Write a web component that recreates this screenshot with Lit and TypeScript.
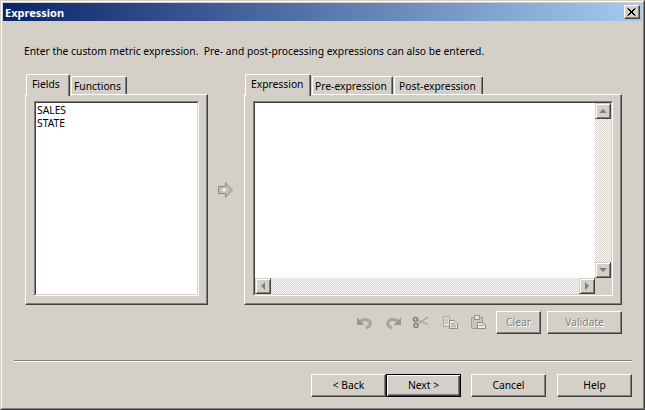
import { LitElement, html, css } from "lit";
import { customElement } from "lit/decorators.js";

@customElement("app-root")
export class AppRoot extends LitElement {
  static styles = css`
    :host { display: block; width: 645px; height: 410px; font-family: "Noto Sans", "DejaVu Sans", sans-serif; font-size: 10.3px; color: #000; }
    * { box-sizing: border-box; }
    .win { width: 645px; height: 410px; background: #d4d0c8; border: 1px solid; border-color: #d4d0c8 #404040 #404040 #d4d0c8; }
    .frame { height: 100%; border: 1px solid; border-color: #fff #808080 #808080 #fff; padding: 1px; display: flex; flex-direction: column; }
    .title { height: 18px; flex: none; display: flex; align-items: center; justify-content: space-between; padding: 0 2px 0 2px; background: linear-gradient(90deg, #0a246a, #a6caf0); color: #fff; font-weight: 700; font-size: 11px; }
    .close { width: 16px; height: 14px; background: #d4d0c8; border: 1px solid; border-color: #fff #404040 #404040 #fff; box-shadow: inset -1px -1px #808080; display: flex; align-items: center; justify-content: center; padding: 0 1px 1px 0; }
    .body { flex: 1; display: flex; flex-direction: column; padding: 0 20px 0 22px; }
    .intro { margin-top: 22px; line-height: 16px; height: 16px; white-space: pre; margin-left: -1px; }
    .panes { display: flex; margin-top: 15px; align-items: flex-start; }
    .col { display: flex; flex-direction: column; }
    .col.left { width: 183px; }
    .col.right { width: 378px; }
    .arrow { width: 36px; height: 231px; display: flex; align-items: center; justify-content: center; }
    .tabs { display: flex; height: 20px; align-items: flex-end; padding-left: 1px; }
    .tab { height: 18px; padding: 0 0 0 2px; border: 1px solid; border-color: #fff #404040 transparent #fff; border-bottom: 0; border-radius: 2px 2px 0 0; box-shadow: inset -1px 0 #808080; line-height: 18px; margin-left: 1px; white-space: nowrap; }
    .tab.active { height: 22px; margin-bottom: -2px; margin-left: 0; padding-left: 5px; position: relative; z-index: 1; background: #d4d0c8; line-height: 18px; }
    .t-fields { width: 44px; }
    .t-functions { width: 56px; }
    .t-expression { width: 66px; }
    .t-pre { width: 81px; }
    .t-post { width: 89px; padding-left: 4px; }
    .pane { height: 211px; display: flex; border: 1px solid; border-color: #fff #404040 #404040 #fff; box-shadow: inset -1px -1px #808080; padding: 6px 8px 8px 8px; }
    .sunken { flex: 1; min-width: 0; border: 1px solid; border-color: #808080 #fff #fff #808080; }
    .well { height: 100%; background: #fff; border: 1px solid; border-color: #404040 #d4d0c8 #d4d0c8 #404040; }
    .list { padding: 1px 1px 0; line-height: 13px; }
    .editor { display: grid; grid-template-columns: 1fr 16px; grid-template-rows: 1fr 16px; }
    .v { display: flex; flex-direction: column; grid-column: 2; grid-row: 1; }
    .h { display: flex; grid-column: 1; grid-row: 2; }
    .corner { background: #d4d0c8; grid-column: 2; grid-row: 2; }
    .track { flex: 1; background: repeating-conic-gradient(#fff 0 25%, #d4d0c8 0 50%) 0 0 / 2px 2px; }
    .sb { flex: none; width: 16px; height: 16px; background: #d4d0c8; border: 1px solid; border-color: #d4d0c8 #404040 #404040 #d4d0c8; box-shadow: inset 1px 1px #fff, inset -1px -1px #808080; display: flex; align-items: center; justify-content: center; }
    .toolbar { display: flex; justify-content: flex-end; align-items: center; margin-top: 6px; height: 23px; }
    .icon { width: 20px; height: 16px; margin-right: 9px; display: block; }
    .icon.last { margin-right: 7px; }
    button { font: inherit; color: #000; height: 23px; padding: 0 0 1px; background: #d4d0c8; border: 1px solid; border-color: #fff #404040 #404040 #fff; box-shadow: inset -1px -1px #808080; }
    button:disabled { color: #808080; text-shadow: 1px 1px #fff; }
    .clear { width: 45px; margin-right: 6px; }
    .validate { width: 75px; }
    .sep { margin: 26px -10px 0 -11px; height: 2px; background: #808080; border-bottom: 1px solid #fff; }
    .footer { display: flex; justify-content: flex-end; margin: 12px -10px 0 0; }
    .footer button { width: 75px; }
    .footer .next { border-color: #000; box-shadow: inset 1px 1px #fff, inset -1px -1px #404040, inset -2px -2px #808080; margin: 0 10px 0 0; }
    .footer .cancel { margin-right: 11px; }
  `;

  private tri(dir: string) {
    const pts: Record<string, string> = { up: "1,5 5,1 9,5", down: "1,1 9,1 5,5", left: "5,1 5,9 1,5", right: "1,1 1,9 5,5" };
    const w = dir === "up" || dir === "down" ? 10 : 6;
    const h = dir === "up" || dir === "down" ? 6 : 10;
    return html`<svg width=${w} height=${h} viewBox="0 0 ${w} ${h}"><polygon points=${pts[dir]} fill="#808080"/></svg>`;
  }

  render() {
    return html`<div class="win"><div class="frame">
      <div class="title"><span>Expression</span>
        <div class="close"><svg width="9" height="8" viewBox="0 0 9 8"><path d="M0.5 0.5L7.5 7.5M1.5 0.5L8.5 7.5M7.5 0.5L0.5 7.5M8.5 0.5L1.5 7.5" stroke="#000" stroke-width="1" fill="none"/></svg></div>
      </div>
      <div class="body">
        <div class="intro">Enter the custom metric expression.  Pre- and post-processing expressions can also be entered.</div>
        <div class="panes">
          <div class="col left">
            <div class="tabs"><div class="tab active t-fields">Fields</div><div class="tab t-functions">Functions</div></div>
            <div class="pane"><div class="sunken"><div class="well list">SALES<br>STATE</div></div></div>
          </div>
          <div class="arrow">
            <svg width="16" height="16" viewBox="0 0 16 16"><path d="M0.5 4.5H7.5V0.8L14.5 8L7.5 15.2V11.5H0.5Z" fill="#bcbcbc" stroke="#8c8c8c"/><path d="M3.5 8H8.5M6 5.5V10.5" stroke="#fff" fill="none"/></svg>
          </div>
          <div class="col right">
            <div class="tabs"><div class="tab active t-expression">Expression</div><div class="tab t-pre">Pre-expression</div><div class="tab t-post">Post-expression</div></div>
            <div class="pane"><div class="sunken"><div class="well editor">
              <div></div>
              <div class="v"><div class="sb">${this.tri("up")}</div><div class="track"></div><div class="sb">${this.tri("down")}</div></div>
              <div class="h"><div class="sb">${this.tri("left")}</div><div class="track"></div><div class="sb">${this.tri("right")}</div></div>
              <div class="corner"></div>
            </div></div></div>
            <div class="toolbar">
              <svg class="icon" viewBox="0 0 20 16"><path d="M7 6.5C10 3.8 15.5 3.8 17 7C18 9.8 15.5 12 13 13" fill="none" stroke="#a4a4a0" stroke-width="3"/><path d="M4 2.5V10H11.5Z" fill="#989894"/></svg>
              <svg class="icon" viewBox="0 0 20 16"><path d="M16 6.5C13 3.8 7.5 3.8 6 7C5 9.8 7.5 12 10 13" fill="none" stroke="#a4a4a0" stroke-width="3"/><path d="M19 2.5V10H11.5Z" fill="#989894"/></svg>
              <svg class="icon" viewBox="0 0 20 16"><path d="M17 2L6.5 9.5M17 9.5L7 5" stroke="#a0a09c" stroke-width="1.3" fill="none"/><circle cx="4.5" cy="4.5" r="2" fill="none" stroke="#808080" stroke-width="1.6"/><circle cx="5" cy="10.5" r="2" fill="none" stroke="#808080" stroke-width="1.6"/></svg>
              <svg class="icon" viewBox="0 0 20 16"><path d="M3.5 1.5H9.5V11.5H3.5Z" fill="#dededa" stroke="#a8a8a4"/><path d="M5 4H8M5 6H8M5 8H8" stroke="#b4b4b0"/><path d="M9.5 5.5H14L17.5 8.5V13.5H9.5Z" fill="#e8e8e4" stroke="#8c8c8c"/><path d="M11 8.5H15M11 10H16M11 11.8H16" stroke="#a0a0a0"/></svg>
              <svg class="icon last" viewBox="0 0 20 16"><path d="M2.5 2.5H13.5V13.5H2.5Z" fill="#c4c4c0" stroke="#a0a0a0"/><path d="M5.5 0.5H10.5V4.5H5.5Z" fill="#e4e4e0" stroke="#909090"/><path d="M8.5 7.5H13L16.5 10V13.5H8.5Z" fill="#e8e8e4" stroke="#8c8c8c"/><path d="M10 10.5H15" stroke="#a0a0a0"/></svg>
              <button class="clear" disabled>Clear</button>
              <button class="validate" disabled>Validate</button>
            </div>
          </div>
        </div>
        <div class="sep"></div>
        <div class="footer">
          <button>&lt; Back</button>
          <button class="next">Next &gt;</button>
          <button class="cancel">Cancel</button>
          <button>Help</button>
        </div>
      </div>
    </div></div>`;
  }
}
